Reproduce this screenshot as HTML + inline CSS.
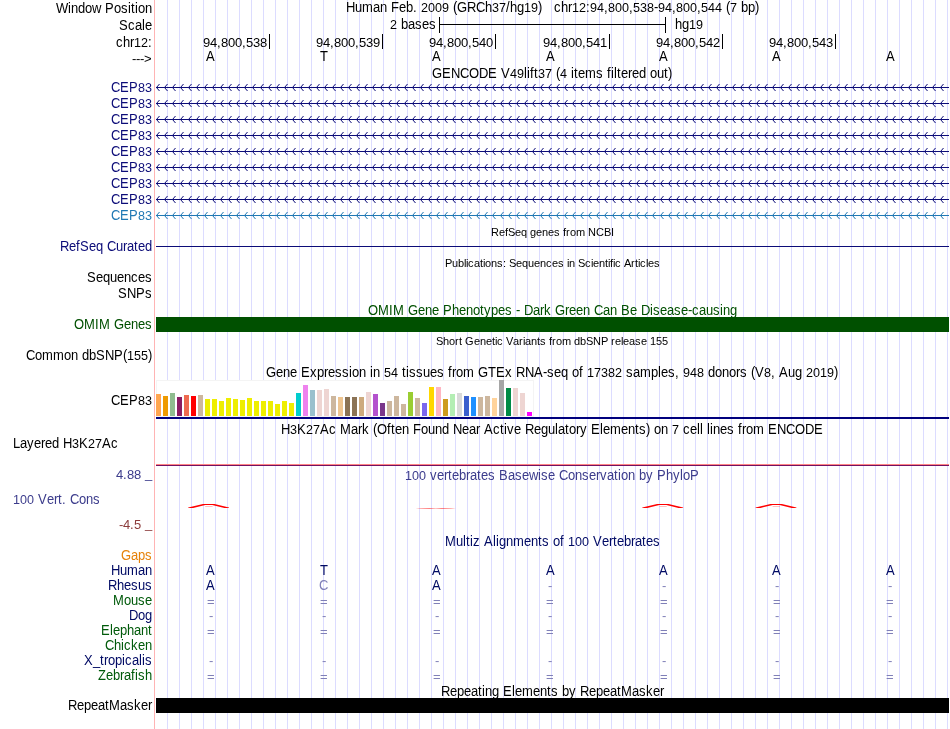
<!DOCTYPE html>
<html lang="en"><head><meta charset="utf-8"><title>UCSC Genome Browser - hg19 chr12:94,800,538-94,800,544</title>
<style>html,body{margin:0;padding:0;background:#fff}body{width:950px;height:729px;overflow:hidden}svg{display:block;will-change:transform;font-family:"Liberation Sans",Arial,Helvetica,sans-serif;font-size:13px}text{white-space:pre}.c{shape-rendering:crispEdges}</style></head><body>
<svg width="950" height="729" viewBox="0 0 950 729">
<rect width="950" height="729" fill="#fff"/>
<g class="c">
<path d="M167.5 0V729M179.5 0V729M191.5 0V729M203.5 0V729M215.5 0V729M227.5 0V729M239.5 0V729M251.5 0V729M263.5 0V729M275.5 0V729M287.5 0V729M299.5 0V729M311.5 0V729M323.5 0V729M335.5 0V729M347.5 0V729M359.5 0V729M371.5 0V729M383.5 0V729M395.5 0V729M407.5 0V729M419.5 0V729M431.5 0V729M443.5 0V729M455.5 0V729M467.5 0V729M479.5 0V729M491.5 0V729M503.5 0V729M515.5 0V729M527.5 0V729M539.5 0V729M551.5 0V729M563.5 0V729M575.5 0V729M587.5 0V729M599.5 0V729M611.5 0V729M623.5 0V729M635.5 0V729M647.5 0V729M659.5 0V729M671.5 0V729M683.5 0V729M695.5 0V729M707.5 0V729M719.5 0V729M731.5 0V729M743.5 0V729M755.5 0V729M767.5 0V729M779.5 0V729M791.5 0V729M803.5 0V729M815.5 0V729M827.5 0V729M839.5 0V729M851.5 0V729M863.5 0V729M875.5 0V729M887.5 0V729M899.5 0V729M911.5 0V729M923.5 0V729M935.5 0V729M947.5 0V729" stroke="#dcdcff" fill="none"/>
<path d="M154.5 0V729" stroke="#ffb4b4" fill="none"/>
</g>
<text id="l_win" x="56 68 71 78 85 92 101 105 114 121 128 131 135 138 145" y="13" transform="matrix(1 0 0 1.08 0 -1.040)">Window Position</text>
<text id="l_scale" x="119 128 135 142 145" y="30" transform="matrix(1 0 0 1.08 0 -2.400)">Scale</text>
<text id="l_chr" x="116 123 130 134 141 148" y="47" transform="matrix(1 0 0 1.08 0 -3.760)">chr<tspan font-size="12.04" textLength="14" lengthAdjust="spacingAndGlyphs">12</tspan>:</text>
<text id="l_arrow" x="132 136 140 144" y="62.6">---&gt;</text>
<text id="t_title" x="346 355 362 373 380 387 391 399 406 413 417 421 428 435 442 449 453 457 467 476 485 492 499 506 510 517 524 531 538 542 546 550 554 561 568 572 579 586 590 597 604 608 615 622 629 633 640 647 654 658 665 672 676 683 690 697 701 708 715 722 726 730 737 741 748 755" y="12" transform="matrix(1 0 0 1.08 0 -0.960)">Human Feb. <tspan font-size="12.04" textLength="28" lengthAdjust="spacingAndGlyphs">2009</tspan> (GRCh<tspan font-size="12.04" textLength="14" lengthAdjust="spacingAndGlyphs">37</tspan>/hg<tspan font-size="12.04" textLength="14" lengthAdjust="spacingAndGlyphs">19</tspan>)   chr<tspan font-size="12.04" textLength="14" lengthAdjust="spacingAndGlyphs">12</tspan>:<tspan font-size="12.04" textLength="14" lengthAdjust="spacingAndGlyphs">94</tspan>,<tspan font-size="12.04" textLength="21" lengthAdjust="spacingAndGlyphs">800</tspan>,<tspan font-size="12.04" textLength="21" lengthAdjust="spacingAndGlyphs">538</tspan>-<tspan font-size="12.04" textLength="14" lengthAdjust="spacingAndGlyphs">94</tspan>,<tspan font-size="12.04" textLength="21" lengthAdjust="spacingAndGlyphs">800</tspan>,<tspan font-size="12.04" textLength="21" lengthAdjust="spacingAndGlyphs">544</tspan> (<tspan font-size="12.04" textLength="7" lengthAdjust="spacingAndGlyphs">7</tspan> bp)</text>
<text id="t_2bases" x="390 397 401 408 415 422 429" y="29" transform="matrix(1 0 0 1.08 0 -2.320)"><tspan font-size="12.04" textLength="7" lengthAdjust="spacingAndGlyphs">2</tspan> bases</text>
<path d="M439 24.5H666M439.5 17V33M665.5 17V33" stroke="#000" fill="none" class="c"/>
<text id="t_hg19" x="675 682 689 696" y="29" transform="matrix(1 0 0 1.08 0 -2.320)">hg<tspan font-size="12.04" textLength="14" lengthAdjust="spacingAndGlyphs">19</tspan></text>
<text id="n0" x="203 210 217 221 228 235 242 246 253 260" y="47">94,800,538</text>
<path d="M269.5 34V49" stroke="#000" fill="none" class="c"/>
<text id="n1" x="316 323 330 334 341 348 355 359 366 373" y="47">94,800,539</text>
<path d="M382.5 34V49" stroke="#000" fill="none" class="c"/>
<text id="n2" x="429 436 443 447 454 461 468 472 479 486" y="47">94,800,540</text>
<path d="M495.5 34V49" stroke="#000" fill="none" class="c"/>
<text id="n3" x="543 550 557 561 568 575 582 586 593 600" y="47">94,800,541</text>
<path d="M609.5 34V49" stroke="#000" fill="none" class="c"/>
<text id="n4" x="656 663 670 674 681 688 695 699 706 713" y="47">94,800,542</text>
<path d="M722.5 34V49" stroke="#000" fill="none" class="c"/>
<text id="n5" x="769 776 783 787 794 801 808 812 819 826" y="47">94,800,543</text>
<path d="M835.5 34V49" stroke="#000" fill="none" class="c"/>
<text id="b0" x="206" y="61" transform="matrix(1 0 0 1.08 0 -4.880)">A</text>
<text id="b1" x="320" y="61" transform="matrix(1 0 0 1.08 0 -4.880)">T</text>
<text id="b2" x="432" y="61" transform="matrix(1 0 0 1.08 0 -4.880)">A</text>
<text id="b3" x="546" y="61" transform="matrix(1 0 0 1.08 0 -4.880)">A</text>
<text id="b4" x="659" y="61" transform="matrix(1 0 0 1.08 0 -4.880)">A</text>
<text id="b5" x="772" y="61" transform="matrix(1 0 0 1.08 0 -4.880)">A</text>
<text id="b6" x="886" y="61" transform="matrix(1 0 0 1.08 0 -4.880)">A</text>
<text id="t_gencode" x="432 442 451 460 469 479 488 497 501 510 517 524 527 530 534 538 545 552 556 560 567 571 574 578 585 596 603 607 611 614 617 621 628 632 639 646 650 657 664 668" y="78" transform="matrix(1 0 0 1.08 0 -6.240)">GENCODE V<tspan font-size="12.04" textLength="14" lengthAdjust="spacingAndGlyphs">49</tspan>lift<tspan font-size="12.04" textLength="14" lengthAdjust="spacingAndGlyphs">37</tspan> (<tspan font-size="12.04" textLength="7" lengthAdjust="spacingAndGlyphs">4</tspan> items filtered out)</text>
<text id="cep0" x="111 120 129 138 145" y="92" fill="#0c0c78" transform="matrix(1 0 0 1.08 0 -7.360)">CEP<tspan font-size="12.04" textLength="14" lengthAdjust="spacingAndGlyphs">83</tspan></text>
<path d="M156 87.5H949" stroke="#0c0c78" fill="none" class="c"/>
<path d="M159.5 84L156.5 87.5L159.5 91M167.5 84L164.5 87.5L167.5 91M175.5 84L172.5 87.5L175.5 91M183.5 84L180.5 87.5L183.5 91M191.5 84L188.5 87.5L191.5 91M199.5 84L196.5 87.5L199.5 91M207.5 84L204.5 87.5L207.5 91M215.5 84L212.5 87.5L215.5 91M223.5 84L220.5 87.5L223.5 91M231.5 84L228.5 87.5L231.5 91M239.5 84L236.5 87.5L239.5 91M247.5 84L244.5 87.5L247.5 91M255.5 84L252.5 87.5L255.5 91M263.5 84L260.5 87.5L263.5 91M271.5 84L268.5 87.5L271.5 91M279.5 84L276.5 87.5L279.5 91M287.5 84L284.5 87.5L287.5 91M295.5 84L292.5 87.5L295.5 91M303.5 84L300.5 87.5L303.5 91M311.5 84L308.5 87.5L311.5 91M319.5 84L316.5 87.5L319.5 91M327.5 84L324.5 87.5L327.5 91M335.5 84L332.5 87.5L335.5 91M343.5 84L340.5 87.5L343.5 91M351.5 84L348.5 87.5L351.5 91M359.5 84L356.5 87.5L359.5 91M367.5 84L364.5 87.5L367.5 91M375.5 84L372.5 87.5L375.5 91M383.5 84L380.5 87.5L383.5 91M391.5 84L388.5 87.5L391.5 91M399.5 84L396.5 87.5L399.5 91M407.5 84L404.5 87.5L407.5 91M415.5 84L412.5 87.5L415.5 91M423.5 84L420.5 87.5L423.5 91M431.5 84L428.5 87.5L431.5 91M439.5 84L436.5 87.5L439.5 91M447.5 84L444.5 87.5L447.5 91M455.5 84L452.5 87.5L455.5 91M463.5 84L460.5 87.5L463.5 91M471.5 84L468.5 87.5L471.5 91M479.5 84L476.5 87.5L479.5 91M487.5 84L484.5 87.5L487.5 91M495.5 84L492.5 87.5L495.5 91M503.5 84L500.5 87.5L503.5 91M511.5 84L508.5 87.5L511.5 91M519.5 84L516.5 87.5L519.5 91M527.5 84L524.5 87.5L527.5 91M535.5 84L532.5 87.5L535.5 91M543.5 84L540.5 87.5L543.5 91M551.5 84L548.5 87.5L551.5 91M559.5 84L556.5 87.5L559.5 91M567.5 84L564.5 87.5L567.5 91M575.5 84L572.5 87.5L575.5 91M583.5 84L580.5 87.5L583.5 91M591.5 84L588.5 87.5L591.5 91M599.5 84L596.5 87.5L599.5 91M607.5 84L604.5 87.5L607.5 91M615.5 84L612.5 87.5L615.5 91M623.5 84L620.5 87.5L623.5 91M631.5 84L628.5 87.5L631.5 91M639.5 84L636.5 87.5L639.5 91M647.5 84L644.5 87.5L647.5 91M655.5 84L652.5 87.5L655.5 91M663.5 84L660.5 87.5L663.5 91M671.5 84L668.5 87.5L671.5 91M679.5 84L676.5 87.5L679.5 91M687.5 84L684.5 87.5L687.5 91M695.5 84L692.5 87.5L695.5 91M703.5 84L700.5 87.5L703.5 91M711.5 84L708.5 87.5L711.5 91M719.5 84L716.5 87.5L719.5 91M727.5 84L724.5 87.5L727.5 91M735.5 84L732.5 87.5L735.5 91M743.5 84L740.5 87.5L743.5 91M751.5 84L748.5 87.5L751.5 91M759.5 84L756.5 87.5L759.5 91M767.5 84L764.5 87.5L767.5 91M775.5 84L772.5 87.5L775.5 91M783.5 84L780.5 87.5L783.5 91M791.5 84L788.5 87.5L791.5 91M799.5 84L796.5 87.5L799.5 91M807.5 84L804.5 87.5L807.5 91M815.5 84L812.5 87.5L815.5 91M823.5 84L820.5 87.5L823.5 91M831.5 84L828.5 87.5L831.5 91M839.5 84L836.5 87.5L839.5 91M847.5 84L844.5 87.5L847.5 91M855.5 84L852.5 87.5L855.5 91M863.5 84L860.5 87.5L863.5 91M871.5 84L868.5 87.5L871.5 91M879.5 84L876.5 87.5L879.5 91M887.5 84L884.5 87.5L887.5 91M895.5 84L892.5 87.5L895.5 91M903.5 84L900.5 87.5L903.5 91M911.5 84L908.5 87.5L911.5 91M919.5 84L916.5 87.5L919.5 91M927.5 84L924.5 87.5L927.5 91M935.5 84L932.5 87.5L935.5 91M943.5 84L940.5 87.5L943.5 91" stroke="#0c0c78" fill="none"/>
<text id="cep1" x="111 120 129 138 145" y="108" fill="#0c0c78" transform="matrix(1 0 0 1.08 0 -8.640)">CEP<tspan font-size="12.04" textLength="14" lengthAdjust="spacingAndGlyphs">83</tspan></text>
<path d="M156 103.5H949" stroke="#0c0c78" fill="none" class="c"/>
<path d="M159.5 100L156.5 103.5L159.5 107M167.5 100L164.5 103.5L167.5 107M175.5 100L172.5 103.5L175.5 107M183.5 100L180.5 103.5L183.5 107M191.5 100L188.5 103.5L191.5 107M199.5 100L196.5 103.5L199.5 107M207.5 100L204.5 103.5L207.5 107M215.5 100L212.5 103.5L215.5 107M223.5 100L220.5 103.5L223.5 107M231.5 100L228.5 103.5L231.5 107M239.5 100L236.5 103.5L239.5 107M247.5 100L244.5 103.5L247.5 107M255.5 100L252.5 103.5L255.5 107M263.5 100L260.5 103.5L263.5 107M271.5 100L268.5 103.5L271.5 107M279.5 100L276.5 103.5L279.5 107M287.5 100L284.5 103.5L287.5 107M295.5 100L292.5 103.5L295.5 107M303.5 100L300.5 103.5L303.5 107M311.5 100L308.5 103.5L311.5 107M319.5 100L316.5 103.5L319.5 107M327.5 100L324.5 103.5L327.5 107M335.5 100L332.5 103.5L335.5 107M343.5 100L340.5 103.5L343.5 107M351.5 100L348.5 103.5L351.5 107M359.5 100L356.5 103.5L359.5 107M367.5 100L364.5 103.5L367.5 107M375.5 100L372.5 103.5L375.5 107M383.5 100L380.5 103.5L383.5 107M391.5 100L388.5 103.5L391.5 107M399.5 100L396.5 103.5L399.5 107M407.5 100L404.5 103.5L407.5 107M415.5 100L412.5 103.5L415.5 107M423.5 100L420.5 103.5L423.5 107M431.5 100L428.5 103.5L431.5 107M439.5 100L436.5 103.5L439.5 107M447.5 100L444.5 103.5L447.5 107M455.5 100L452.5 103.5L455.5 107M463.5 100L460.5 103.5L463.5 107M471.5 100L468.5 103.5L471.5 107M479.5 100L476.5 103.5L479.5 107M487.5 100L484.5 103.5L487.5 107M495.5 100L492.5 103.5L495.5 107M503.5 100L500.5 103.5L503.5 107M511.5 100L508.5 103.5L511.5 107M519.5 100L516.5 103.5L519.5 107M527.5 100L524.5 103.5L527.5 107M535.5 100L532.5 103.5L535.5 107M543.5 100L540.5 103.5L543.5 107M551.5 100L548.5 103.5L551.5 107M559.5 100L556.5 103.5L559.5 107M567.5 100L564.5 103.5L567.5 107M575.5 100L572.5 103.5L575.5 107M583.5 100L580.5 103.5L583.5 107M591.5 100L588.5 103.5L591.5 107M599.5 100L596.5 103.5L599.5 107M607.5 100L604.5 103.5L607.5 107M615.5 100L612.5 103.5L615.5 107M623.5 100L620.5 103.5L623.5 107M631.5 100L628.5 103.5L631.5 107M639.5 100L636.5 103.5L639.5 107M647.5 100L644.5 103.5L647.5 107M655.5 100L652.5 103.5L655.5 107M663.5 100L660.5 103.5L663.5 107M671.5 100L668.5 103.5L671.5 107M679.5 100L676.5 103.5L679.5 107M687.5 100L684.5 103.5L687.5 107M695.5 100L692.5 103.5L695.5 107M703.5 100L700.5 103.5L703.5 107M711.5 100L708.5 103.5L711.5 107M719.5 100L716.5 103.5L719.5 107M727.5 100L724.5 103.5L727.5 107M735.5 100L732.5 103.5L735.5 107M743.5 100L740.5 103.5L743.5 107M751.5 100L748.5 103.5L751.5 107M759.5 100L756.5 103.5L759.5 107M767.5 100L764.5 103.5L767.5 107M775.5 100L772.5 103.5L775.5 107M783.5 100L780.5 103.5L783.5 107M791.5 100L788.5 103.5L791.5 107M799.5 100L796.5 103.5L799.5 107M807.5 100L804.5 103.5L807.5 107M815.5 100L812.5 103.5L815.5 107M823.5 100L820.5 103.5L823.5 107M831.5 100L828.5 103.5L831.5 107M839.5 100L836.5 103.5L839.5 107M847.5 100L844.5 103.5L847.5 107M855.5 100L852.5 103.5L855.5 107M863.5 100L860.5 103.5L863.5 107M871.5 100L868.5 103.5L871.5 107M879.5 100L876.5 103.5L879.5 107M887.5 100L884.5 103.5L887.5 107M895.5 100L892.5 103.5L895.5 107M903.5 100L900.5 103.5L903.5 107M911.5 100L908.5 103.5L911.5 107M919.5 100L916.5 103.5L919.5 107M927.5 100L924.5 103.5L927.5 107M935.5 100L932.5 103.5L935.5 107M943.5 100L940.5 103.5L943.5 107" stroke="#0c0c78" fill="none"/>
<text id="cep2" x="111 120 129 138 145" y="124" fill="#0c0c78" transform="matrix(1 0 0 1.08 0 -9.920)">CEP<tspan font-size="12.04" textLength="14" lengthAdjust="spacingAndGlyphs">83</tspan></text>
<path d="M156 119.5H949" stroke="#0c0c78" fill="none" class="c"/>
<path d="M159.5 116L156.5 119.5L159.5 123M167.5 116L164.5 119.5L167.5 123M175.5 116L172.5 119.5L175.5 123M183.5 116L180.5 119.5L183.5 123M191.5 116L188.5 119.5L191.5 123M199.5 116L196.5 119.5L199.5 123M207.5 116L204.5 119.5L207.5 123M215.5 116L212.5 119.5L215.5 123M223.5 116L220.5 119.5L223.5 123M231.5 116L228.5 119.5L231.5 123M239.5 116L236.5 119.5L239.5 123M247.5 116L244.5 119.5L247.5 123M255.5 116L252.5 119.5L255.5 123M263.5 116L260.5 119.5L263.5 123M271.5 116L268.5 119.5L271.5 123M279.5 116L276.5 119.5L279.5 123M287.5 116L284.5 119.5L287.5 123M295.5 116L292.5 119.5L295.5 123M303.5 116L300.5 119.5L303.5 123M311.5 116L308.5 119.5L311.5 123M319.5 116L316.5 119.5L319.5 123M327.5 116L324.5 119.5L327.5 123M335.5 116L332.5 119.5L335.5 123M343.5 116L340.5 119.5L343.5 123M351.5 116L348.5 119.5L351.5 123M359.5 116L356.5 119.5L359.5 123M367.5 116L364.5 119.5L367.5 123M375.5 116L372.5 119.5L375.5 123M383.5 116L380.5 119.5L383.5 123M391.5 116L388.5 119.5L391.5 123M399.5 116L396.5 119.5L399.5 123M407.5 116L404.5 119.5L407.5 123M415.5 116L412.5 119.5L415.5 123M423.5 116L420.5 119.5L423.5 123M431.5 116L428.5 119.5L431.5 123M439.5 116L436.5 119.5L439.5 123M447.5 116L444.5 119.5L447.5 123M455.5 116L452.5 119.5L455.5 123M463.5 116L460.5 119.5L463.5 123M471.5 116L468.5 119.5L471.5 123M479.5 116L476.5 119.5L479.5 123M487.5 116L484.5 119.5L487.5 123M495.5 116L492.5 119.5L495.5 123M503.5 116L500.5 119.5L503.5 123M511.5 116L508.5 119.5L511.5 123M519.5 116L516.5 119.5L519.5 123M527.5 116L524.5 119.5L527.5 123M535.5 116L532.5 119.5L535.5 123M543.5 116L540.5 119.5L543.5 123M551.5 116L548.5 119.5L551.5 123M559.5 116L556.5 119.5L559.5 123M567.5 116L564.5 119.5L567.5 123M575.5 116L572.5 119.5L575.5 123M583.5 116L580.5 119.5L583.5 123M591.5 116L588.5 119.5L591.5 123M599.5 116L596.5 119.5L599.5 123M607.5 116L604.5 119.5L607.5 123M615.5 116L612.5 119.5L615.5 123M623.5 116L620.5 119.5L623.5 123M631.5 116L628.5 119.5L631.5 123M639.5 116L636.5 119.5L639.5 123M647.5 116L644.5 119.5L647.5 123M655.5 116L652.5 119.5L655.5 123M663.5 116L660.5 119.5L663.5 123M671.5 116L668.5 119.5L671.5 123M679.5 116L676.5 119.5L679.5 123M687.5 116L684.5 119.5L687.5 123M695.5 116L692.5 119.5L695.5 123M703.5 116L700.5 119.5L703.5 123M711.5 116L708.5 119.5L711.5 123M719.5 116L716.5 119.5L719.5 123M727.5 116L724.5 119.5L727.5 123M735.5 116L732.5 119.5L735.5 123M743.5 116L740.5 119.5L743.5 123M751.5 116L748.5 119.5L751.5 123M759.5 116L756.5 119.5L759.5 123M767.5 116L764.5 119.5L767.5 123M775.5 116L772.5 119.5L775.5 123M783.5 116L780.5 119.5L783.5 123M791.5 116L788.5 119.5L791.5 123M799.5 116L796.5 119.5L799.5 123M807.5 116L804.5 119.5L807.5 123M815.5 116L812.5 119.5L815.5 123M823.5 116L820.5 119.5L823.5 123M831.5 116L828.5 119.5L831.5 123M839.5 116L836.5 119.5L839.5 123M847.5 116L844.5 119.5L847.5 123M855.5 116L852.5 119.5L855.5 123M863.5 116L860.5 119.5L863.5 123M871.5 116L868.5 119.5L871.5 123M879.5 116L876.5 119.5L879.5 123M887.5 116L884.5 119.5L887.5 123M895.5 116L892.5 119.5L895.5 123M903.5 116L900.5 119.5L903.5 123M911.5 116L908.5 119.5L911.5 123M919.5 116L916.5 119.5L919.5 123M927.5 116L924.5 119.5L927.5 123M935.5 116L932.5 119.5L935.5 123M943.5 116L940.5 119.5L943.5 123" stroke="#0c0c78" fill="none"/>
<text id="cep3" x="111 120 129 138 145" y="140" fill="#0c0c78" transform="matrix(1 0 0 1.08 0 -11.200)">CEP<tspan font-size="12.04" textLength="14" lengthAdjust="spacingAndGlyphs">83</tspan></text>
<path d="M156 135.5H949" stroke="#0c0c78" fill="none" class="c"/>
<path d="M159.5 132L156.5 135.5L159.5 139M167.5 132L164.5 135.5L167.5 139M175.5 132L172.5 135.5L175.5 139M183.5 132L180.5 135.5L183.5 139M191.5 132L188.5 135.5L191.5 139M199.5 132L196.5 135.5L199.5 139M207.5 132L204.5 135.5L207.5 139M215.5 132L212.5 135.5L215.5 139M223.5 132L220.5 135.5L223.5 139M231.5 132L228.5 135.5L231.5 139M239.5 132L236.5 135.5L239.5 139M247.5 132L244.5 135.5L247.5 139M255.5 132L252.5 135.5L255.5 139M263.5 132L260.5 135.5L263.5 139M271.5 132L268.5 135.5L271.5 139M279.5 132L276.5 135.5L279.5 139M287.5 132L284.5 135.5L287.5 139M295.5 132L292.5 135.5L295.5 139M303.5 132L300.5 135.5L303.5 139M311.5 132L308.5 135.5L311.5 139M319.5 132L316.5 135.5L319.5 139M327.5 132L324.5 135.5L327.5 139M335.5 132L332.5 135.5L335.5 139M343.5 132L340.5 135.5L343.5 139M351.5 132L348.5 135.5L351.5 139M359.5 132L356.5 135.5L359.5 139M367.5 132L364.5 135.5L367.5 139M375.5 132L372.5 135.5L375.5 139M383.5 132L380.5 135.5L383.5 139M391.5 132L388.5 135.5L391.5 139M399.5 132L396.5 135.5L399.5 139M407.5 132L404.5 135.5L407.5 139M415.5 132L412.5 135.5L415.5 139M423.5 132L420.5 135.5L423.5 139M431.5 132L428.5 135.5L431.5 139M439.5 132L436.5 135.5L439.5 139M447.5 132L444.5 135.5L447.5 139M455.5 132L452.5 135.5L455.5 139M463.5 132L460.5 135.5L463.5 139M471.5 132L468.5 135.5L471.5 139M479.5 132L476.5 135.5L479.5 139M487.5 132L484.5 135.5L487.5 139M495.5 132L492.5 135.5L495.5 139M503.5 132L500.5 135.5L503.5 139M511.5 132L508.5 135.5L511.5 139M519.5 132L516.5 135.5L519.5 139M527.5 132L524.5 135.5L527.5 139M535.5 132L532.5 135.5L535.5 139M543.5 132L540.5 135.5L543.5 139M551.5 132L548.5 135.5L551.5 139M559.5 132L556.5 135.5L559.5 139M567.5 132L564.5 135.5L567.5 139M575.5 132L572.5 135.5L575.5 139M583.5 132L580.5 135.5L583.5 139M591.5 132L588.5 135.5L591.5 139M599.5 132L596.5 135.5L599.5 139M607.5 132L604.5 135.5L607.5 139M615.5 132L612.5 135.5L615.5 139M623.5 132L620.5 135.5L623.5 139M631.5 132L628.5 135.5L631.5 139M639.5 132L636.5 135.5L639.5 139M647.5 132L644.5 135.5L647.5 139M655.5 132L652.5 135.5L655.5 139M663.5 132L660.5 135.5L663.5 139M671.5 132L668.5 135.5L671.5 139M679.5 132L676.5 135.5L679.5 139M687.5 132L684.5 135.5L687.5 139M695.5 132L692.5 135.5L695.5 139M703.5 132L700.5 135.5L703.5 139M711.5 132L708.5 135.5L711.5 139M719.5 132L716.5 135.5L719.5 139M727.5 132L724.5 135.5L727.5 139M735.5 132L732.5 135.5L735.5 139M743.5 132L740.5 135.5L743.5 139M751.5 132L748.5 135.5L751.5 139M759.5 132L756.5 135.5L759.5 139M767.5 132L764.5 135.5L767.5 139M775.5 132L772.5 135.5L775.5 139M783.5 132L780.5 135.5L783.5 139M791.5 132L788.5 135.5L791.5 139M799.5 132L796.5 135.5L799.5 139M807.5 132L804.5 135.5L807.5 139M815.5 132L812.5 135.5L815.5 139M823.5 132L820.5 135.5L823.5 139M831.5 132L828.5 135.5L831.5 139M839.5 132L836.5 135.5L839.5 139M847.5 132L844.5 135.5L847.5 139M855.5 132L852.5 135.5L855.5 139M863.5 132L860.5 135.5L863.5 139M871.5 132L868.5 135.5L871.5 139M879.5 132L876.5 135.5L879.5 139M887.5 132L884.5 135.5L887.5 139M895.5 132L892.5 135.5L895.5 139M903.5 132L900.5 135.5L903.5 139M911.5 132L908.5 135.5L911.5 139M919.5 132L916.5 135.5L919.5 139M927.5 132L924.5 135.5L927.5 139M935.5 132L932.5 135.5L935.5 139M943.5 132L940.5 135.5L943.5 139" stroke="#0c0c78" fill="none"/>
<text id="cep4" x="111 120 129 138 145" y="156" fill="#0c0c78" transform="matrix(1 0 0 1.08 0 -12.480)">CEP<tspan font-size="12.04" textLength="14" lengthAdjust="spacingAndGlyphs">83</tspan></text>
<path d="M156 151.5H949" stroke="#0c0c78" fill="none" class="c"/>
<path d="M159.5 148L156.5 151.5L159.5 155M167.5 148L164.5 151.5L167.5 155M175.5 148L172.5 151.5L175.5 155M183.5 148L180.5 151.5L183.5 155M191.5 148L188.5 151.5L191.5 155M199.5 148L196.5 151.5L199.5 155M207.5 148L204.5 151.5L207.5 155M215.5 148L212.5 151.5L215.5 155M223.5 148L220.5 151.5L223.5 155M231.5 148L228.5 151.5L231.5 155M239.5 148L236.5 151.5L239.5 155M247.5 148L244.5 151.5L247.5 155M255.5 148L252.5 151.5L255.5 155M263.5 148L260.5 151.5L263.5 155M271.5 148L268.5 151.5L271.5 155M279.5 148L276.5 151.5L279.5 155M287.5 148L284.5 151.5L287.5 155M295.5 148L292.5 151.5L295.5 155M303.5 148L300.5 151.5L303.5 155M311.5 148L308.5 151.5L311.5 155M319.5 148L316.5 151.5L319.5 155M327.5 148L324.5 151.5L327.5 155M335.5 148L332.5 151.5L335.5 155M343.5 148L340.5 151.5L343.5 155M351.5 148L348.5 151.5L351.5 155M359.5 148L356.5 151.5L359.5 155M367.5 148L364.5 151.5L367.5 155M375.5 148L372.5 151.5L375.5 155M383.5 148L380.5 151.5L383.5 155M391.5 148L388.5 151.5L391.5 155M399.5 148L396.5 151.5L399.5 155M407.5 148L404.5 151.5L407.5 155M415.5 148L412.5 151.5L415.5 155M423.5 148L420.5 151.5L423.5 155M431.5 148L428.5 151.5L431.5 155M439.5 148L436.5 151.5L439.5 155M447.5 148L444.5 151.5L447.5 155M455.5 148L452.5 151.5L455.5 155M463.5 148L460.5 151.5L463.5 155M471.5 148L468.5 151.5L471.5 155M479.5 148L476.5 151.5L479.5 155M487.5 148L484.5 151.5L487.5 155M495.5 148L492.5 151.5L495.5 155M503.5 148L500.5 151.5L503.5 155M511.5 148L508.5 151.5L511.5 155M519.5 148L516.5 151.5L519.5 155M527.5 148L524.5 151.5L527.5 155M535.5 148L532.5 151.5L535.5 155M543.5 148L540.5 151.5L543.5 155M551.5 148L548.5 151.5L551.5 155M559.5 148L556.5 151.5L559.5 155M567.5 148L564.5 151.5L567.5 155M575.5 148L572.5 151.5L575.5 155M583.5 148L580.5 151.5L583.5 155M591.5 148L588.5 151.5L591.5 155M599.5 148L596.5 151.5L599.5 155M607.5 148L604.5 151.5L607.5 155M615.5 148L612.5 151.5L615.5 155M623.5 148L620.5 151.5L623.5 155M631.5 148L628.5 151.5L631.5 155M639.5 148L636.5 151.5L639.5 155M647.5 148L644.5 151.5L647.5 155M655.5 148L652.5 151.5L655.5 155M663.5 148L660.5 151.5L663.5 155M671.5 148L668.5 151.5L671.5 155M679.5 148L676.5 151.5L679.5 155M687.5 148L684.5 151.5L687.5 155M695.5 148L692.5 151.5L695.5 155M703.5 148L700.5 151.5L703.5 155M711.5 148L708.5 151.5L711.5 155M719.5 148L716.5 151.5L719.5 155M727.5 148L724.5 151.5L727.5 155M735.5 148L732.5 151.5L735.5 155M743.5 148L740.5 151.5L743.5 155M751.5 148L748.5 151.5L751.5 155M759.5 148L756.5 151.5L759.5 155M767.5 148L764.5 151.5L767.5 155M775.5 148L772.5 151.5L775.5 155M783.5 148L780.5 151.5L783.5 155M791.5 148L788.5 151.5L791.5 155M799.5 148L796.5 151.5L799.5 155M807.5 148L804.5 151.5L807.5 155M815.5 148L812.5 151.5L815.5 155M823.5 148L820.5 151.5L823.5 155M831.5 148L828.5 151.5L831.5 155M839.5 148L836.5 151.5L839.5 155M847.5 148L844.5 151.5L847.5 155M855.5 148L852.5 151.5L855.5 155M863.5 148L860.5 151.5L863.5 155M871.5 148L868.5 151.5L871.5 155M879.5 148L876.5 151.5L879.5 155M887.5 148L884.5 151.5L887.5 155M895.5 148L892.5 151.5L895.5 155M903.5 148L900.5 151.5L903.5 155M911.5 148L908.5 151.5L911.5 155M919.5 148L916.5 151.5L919.5 155M927.5 148L924.5 151.5L927.5 155M935.5 148L932.5 151.5L935.5 155M943.5 148L940.5 151.5L943.5 155" stroke="#0c0c78" fill="none"/>
<text id="cep5" x="111 120 129 138 145" y="172" fill="#0c0c78" transform="matrix(1 0 0 1.08 0 -13.760)">CEP<tspan font-size="12.04" textLength="14" lengthAdjust="spacingAndGlyphs">83</tspan></text>
<path d="M156 167.5H949" stroke="#0c0c78" fill="none" class="c"/>
<path d="M159.5 164L156.5 167.5L159.5 171M167.5 164L164.5 167.5L167.5 171M175.5 164L172.5 167.5L175.5 171M183.5 164L180.5 167.5L183.5 171M191.5 164L188.5 167.5L191.5 171M199.5 164L196.5 167.5L199.5 171M207.5 164L204.5 167.5L207.5 171M215.5 164L212.5 167.5L215.5 171M223.5 164L220.5 167.5L223.5 171M231.5 164L228.5 167.5L231.5 171M239.5 164L236.5 167.5L239.5 171M247.5 164L244.5 167.5L247.5 171M255.5 164L252.5 167.5L255.5 171M263.5 164L260.5 167.5L263.5 171M271.5 164L268.5 167.5L271.5 171M279.5 164L276.5 167.5L279.5 171M287.5 164L284.5 167.5L287.5 171M295.5 164L292.5 167.5L295.5 171M303.5 164L300.5 167.5L303.5 171M311.5 164L308.5 167.5L311.5 171M319.5 164L316.5 167.5L319.5 171M327.5 164L324.5 167.5L327.5 171M335.5 164L332.5 167.5L335.5 171M343.5 164L340.5 167.5L343.5 171M351.5 164L348.5 167.5L351.5 171M359.5 164L356.5 167.5L359.5 171M367.5 164L364.5 167.5L367.5 171M375.5 164L372.5 167.5L375.5 171M383.5 164L380.5 167.5L383.5 171M391.5 164L388.5 167.5L391.5 171M399.5 164L396.5 167.5L399.5 171M407.5 164L404.5 167.5L407.5 171M415.5 164L412.5 167.5L415.5 171M423.5 164L420.5 167.5L423.5 171M431.5 164L428.5 167.5L431.5 171M439.5 164L436.5 167.5L439.5 171M447.5 164L444.5 167.5L447.5 171M455.5 164L452.5 167.5L455.5 171M463.5 164L460.5 167.5L463.5 171M471.5 164L468.5 167.5L471.5 171M479.5 164L476.5 167.5L479.5 171M487.5 164L484.5 167.5L487.5 171M495.5 164L492.5 167.5L495.5 171M503.5 164L500.5 167.5L503.5 171M511.5 164L508.5 167.5L511.5 171M519.5 164L516.5 167.5L519.5 171M527.5 164L524.5 167.5L527.5 171M535.5 164L532.5 167.5L535.5 171M543.5 164L540.5 167.5L543.5 171M551.5 164L548.5 167.5L551.5 171M559.5 164L556.5 167.5L559.5 171M567.5 164L564.5 167.5L567.5 171M575.5 164L572.5 167.5L575.5 171M583.5 164L580.5 167.5L583.5 171M591.5 164L588.5 167.5L591.5 171M599.5 164L596.5 167.5L599.5 171M607.5 164L604.5 167.5L607.5 171M615.5 164L612.5 167.5L615.5 171M623.5 164L620.5 167.5L623.5 171M631.5 164L628.5 167.5L631.5 171M639.5 164L636.5 167.5L639.5 171M647.5 164L644.5 167.5L647.5 171M655.5 164L652.5 167.5L655.5 171M663.5 164L660.5 167.5L663.5 171M671.5 164L668.5 167.5L671.5 171M679.5 164L676.5 167.5L679.5 171M687.5 164L684.5 167.5L687.5 171M695.5 164L692.5 167.5L695.5 171M703.5 164L700.5 167.5L703.5 171M711.5 164L708.5 167.5L711.5 171M719.5 164L716.5 167.5L719.5 171M727.5 164L724.5 167.5L727.5 171M735.5 164L732.5 167.5L735.5 171M743.5 164L740.5 167.5L743.5 171M751.5 164L748.5 167.5L751.5 171M759.5 164L756.5 167.5L759.5 171M767.5 164L764.5 167.5L767.5 171M775.5 164L772.5 167.5L775.5 171M783.5 164L780.5 167.5L783.5 171M791.5 164L788.5 167.5L791.5 171M799.5 164L796.5 167.5L799.5 171M807.5 164L804.5 167.5L807.5 171M815.5 164L812.5 167.5L815.5 171M823.5 164L820.5 167.5L823.5 171M831.5 164L828.5 167.5L831.5 171M839.5 164L836.5 167.5L839.5 171M847.5 164L844.5 167.5L847.5 171M855.5 164L852.5 167.5L855.5 171M863.5 164L860.5 167.5L863.5 171M871.5 164L868.5 167.5L871.5 171M879.5 164L876.5 167.5L879.5 171M887.5 164L884.5 167.5L887.5 171M895.5 164L892.5 167.5L895.5 171M903.5 164L900.5 167.5L903.5 171M911.5 164L908.5 167.5L911.5 171M919.5 164L916.5 167.5L919.5 171M927.5 164L924.5 167.5L927.5 171M935.5 164L932.5 167.5L935.5 171M943.5 164L940.5 167.5L943.5 171" stroke="#0c0c78" fill="none"/>
<text id="cep6" x="111 120 129 138 145" y="188" fill="#0c0c78" transform="matrix(1 0 0 1.08 0 -15.040)">CEP<tspan font-size="12.04" textLength="14" lengthAdjust="spacingAndGlyphs">83</tspan></text>
<path d="M156 183.5H949" stroke="#0c0c78" fill="none" class="c"/>
<path d="M159.5 180L156.5 183.5L159.5 187M167.5 180L164.5 183.5L167.5 187M175.5 180L172.5 183.5L175.5 187M183.5 180L180.5 183.5L183.5 187M191.5 180L188.5 183.5L191.5 187M199.5 180L196.5 183.5L199.5 187M207.5 180L204.5 183.5L207.5 187M215.5 180L212.5 183.5L215.5 187M223.5 180L220.5 183.5L223.5 187M231.5 180L228.5 183.5L231.5 187M239.5 180L236.5 183.5L239.5 187M247.5 180L244.5 183.5L247.5 187M255.5 180L252.5 183.5L255.5 187M263.5 180L260.5 183.5L263.5 187M271.5 180L268.5 183.5L271.5 187M279.5 180L276.5 183.5L279.5 187M287.5 180L284.5 183.5L287.5 187M295.5 180L292.5 183.5L295.5 187M303.5 180L300.5 183.5L303.5 187M311.5 180L308.5 183.5L311.5 187M319.5 180L316.5 183.5L319.5 187M327.5 180L324.5 183.5L327.5 187M335.5 180L332.5 183.5L335.5 187M343.5 180L340.5 183.5L343.5 187M351.5 180L348.5 183.5L351.5 187M359.5 180L356.5 183.5L359.5 187M367.5 180L364.5 183.5L367.5 187M375.5 180L372.5 183.5L375.5 187M383.5 180L380.5 183.5L383.5 187M391.5 180L388.5 183.5L391.5 187M399.5 180L396.5 183.5L399.5 187M407.5 180L404.5 183.5L407.5 187M415.5 180L412.5 183.5L415.5 187M423.5 180L420.5 183.5L423.5 187M431.5 180L428.5 183.5L431.5 187M439.5 180L436.5 183.5L439.5 187M447.5 180L444.5 183.5L447.5 187M455.5 180L452.5 183.5L455.5 187M463.5 180L460.5 183.5L463.5 187M471.5 180L468.5 183.5L471.5 187M479.5 180L476.5 183.5L479.5 187M487.5 180L484.5 183.5L487.5 187M495.5 180L492.5 183.5L495.5 187M503.5 180L500.5 183.5L503.5 187M511.5 180L508.5 183.5L511.5 187M519.5 180L516.5 183.5L519.5 187M527.5 180L524.5 183.5L527.5 187M535.5 180L532.5 183.5L535.5 187M543.5 180L540.5 183.5L543.5 187M551.5 180L548.5 183.5L551.5 187M559.5 180L556.5 183.5L559.5 187M567.5 180L564.5 183.5L567.5 187M575.5 180L572.5 183.5L575.5 187M583.5 180L580.5 183.5L583.5 187M591.5 180L588.5 183.5L591.5 187M599.5 180L596.5 183.5L599.5 187M607.5 180L604.5 183.5L607.5 187M615.5 180L612.5 183.5L615.5 187M623.5 180L620.5 183.5L623.5 187M631.5 180L628.5 183.5L631.5 187M639.5 180L636.5 183.5L639.5 187M647.5 180L644.5 183.5L647.5 187M655.5 180L652.5 183.5L655.5 187M663.5 180L660.5 183.5L663.5 187M671.5 180L668.5 183.5L671.5 187M679.5 180L676.5 183.5L679.5 187M687.5 180L684.5 183.5L687.5 187M695.5 180L692.5 183.5L695.5 187M703.5 180L700.5 183.5L703.5 187M711.5 180L708.5 183.5L711.5 187M719.5 180L716.5 183.5L719.5 187M727.5 180L724.5 183.5L727.5 187M735.5 180L732.5 183.5L735.5 187M743.5 180L740.5 183.5L743.5 187M751.5 180L748.5 183.5L751.5 187M759.5 180L756.5 183.5L759.5 187M767.5 180L764.5 183.5L767.5 187M775.5 180L772.5 183.5L775.5 187M783.5 180L780.5 183.5L783.5 187M791.5 180L788.5 183.5L791.5 187M799.5 180L796.5 183.5L799.5 187M807.5 180L804.5 183.5L807.5 187M815.5 180L812.5 183.5L815.5 187M823.5 180L820.5 183.5L823.5 187M831.5 180L828.5 183.5L831.5 187M839.5 180L836.5 183.5L839.5 187M847.5 180L844.5 183.5L847.5 187M855.5 180L852.5 183.5L855.5 187M863.5 180L860.5 183.5L863.5 187M871.5 180L868.5 183.5L871.5 187M879.5 180L876.5 183.5L879.5 187M887.5 180L884.5 183.5L887.5 187M895.5 180L892.5 183.5L895.5 187M903.5 180L900.5 183.5L903.5 187M911.5 180L908.5 183.5L911.5 187M919.5 180L916.5 183.5L919.5 187M927.5 180L924.5 183.5L927.5 187M935.5 180L932.5 183.5L935.5 187M943.5 180L940.5 183.5L943.5 187" stroke="#0c0c78" fill="none"/>
<text id="cep7" x="111 120 129 138 145" y="204" fill="#0c0c78" transform="matrix(1 0 0 1.08 0 -16.320)">CEP<tspan font-size="12.04" textLength="14" lengthAdjust="spacingAndGlyphs">83</tspan></text>
<path d="M156 199.5H949" stroke="#0c0c78" fill="none" class="c"/>
<path d="M159.5 196L156.5 199.5L159.5 203M167.5 196L164.5 199.5L167.5 203M175.5 196L172.5 199.5L175.5 203M183.5 196L180.5 199.5L183.5 203M191.5 196L188.5 199.5L191.5 203M199.5 196L196.5 199.5L199.5 203M207.5 196L204.5 199.5L207.5 203M215.5 196L212.5 199.5L215.5 203M223.5 196L220.5 199.5L223.5 203M231.5 196L228.5 199.5L231.5 203M239.5 196L236.5 199.5L239.5 203M247.5 196L244.5 199.5L247.5 203M255.5 196L252.5 199.5L255.5 203M263.5 196L260.5 199.5L263.5 203M271.5 196L268.5 199.5L271.5 203M279.5 196L276.5 199.5L279.5 203M287.5 196L284.5 199.5L287.5 203M295.5 196L292.5 199.5L295.5 203M303.5 196L300.5 199.5L303.5 203M311.5 196L308.5 199.5L311.5 203M319.5 196L316.5 199.5L319.5 203M327.5 196L324.5 199.5L327.5 203M335.5 196L332.5 199.5L335.5 203M343.5 196L340.5 199.5L343.5 203M351.5 196L348.5 199.5L351.5 203M359.5 196L356.5 199.5L359.5 203M367.5 196L364.5 199.5L367.5 203M375.5 196L372.5 199.5L375.5 203M383.5 196L380.5 199.5L383.5 203M391.5 196L388.5 199.5L391.5 203M399.5 196L396.5 199.5L399.5 203M407.5 196L404.5 199.5L407.5 203M415.5 196L412.5 199.5L415.5 203M423.5 196L420.5 199.5L423.5 203M431.5 196L428.5 199.5L431.5 203M439.5 196L436.5 199.5L439.5 203M447.5 196L444.5 199.5L447.5 203M455.5 196L452.5 199.5L455.5 203M463.5 196L460.5 199.5L463.5 203M471.5 196L468.5 199.5L471.5 203M479.5 196L476.5 199.5L479.5 203M487.5 196L484.5 199.5L487.5 203M495.5 196L492.5 199.5L495.5 203M503.5 196L500.5 199.5L503.5 203M511.5 196L508.5 199.5L511.5 203M519.5 196L516.5 199.5L519.5 203M527.5 196L524.5 199.5L527.5 203M535.5 196L532.5 199.5L535.5 203M543.5 196L540.5 199.5L543.5 203M551.5 196L548.5 199.5L551.5 203M559.5 196L556.5 199.5L559.5 203M567.5 196L564.5 199.5L567.5 203M575.5 196L572.5 199.5L575.5 203M583.5 196L580.5 199.5L583.5 203M591.5 196L588.5 199.5L591.5 203M599.5 196L596.5 199.5L599.5 203M607.5 196L604.5 199.5L607.5 203M615.5 196L612.5 199.5L615.5 203M623.5 196L620.5 199.5L623.5 203M631.5 196L628.5 199.5L631.5 203M639.5 196L636.5 199.5L639.5 203M647.5 196L644.5 199.5L647.5 203M655.5 196L652.5 199.5L655.5 203M663.5 196L660.5 199.5L663.5 203M671.5 196L668.5 199.5L671.5 203M679.5 196L676.5 199.5L679.5 203M687.5 196L684.5 199.5L687.5 203M695.5 196L692.5 199.5L695.5 203M703.5 196L700.5 199.5L703.5 203M711.5 196L708.5 199.5L711.5 203M719.5 196L716.5 199.5L719.5 203M727.5 196L724.5 199.5L727.5 203M735.5 196L732.5 199.5L735.5 203M743.5 196L740.5 199.5L743.5 203M751.5 196L748.5 199.5L751.5 203M759.5 196L756.5 199.5L759.5 203M767.5 196L764.5 199.5L767.5 203M775.5 196L772.5 199.5L775.5 203M783.5 196L780.5 199.5L783.5 203M791.5 196L788.5 199.5L791.5 203M799.5 196L796.5 199.5L799.5 203M807.5 196L804.5 199.5L807.5 203M815.5 196L812.5 199.5L815.5 203M823.5 196L820.5 199.5L823.5 203M831.5 196L828.5 199.5L831.5 203M839.5 196L836.5 199.5L839.5 203M847.5 196L844.5 199.5L847.5 203M855.5 196L852.5 199.5L855.5 203M863.5 196L860.5 199.5L863.5 203M871.5 196L868.5 199.5L871.5 203M879.5 196L876.5 199.5L879.5 203M887.5 196L884.5 199.5L887.5 203M895.5 196L892.5 199.5L895.5 203M903.5 196L900.5 199.5L903.5 203M911.5 196L908.5 199.5L911.5 203M919.5 196L916.5 199.5L919.5 203M927.5 196L924.5 199.5L927.5 203M935.5 196L932.5 199.5L935.5 203M943.5 196L940.5 199.5L943.5 203" stroke="#0c0c78" fill="none"/>
<text id="cep8" x="111 120 129 138 145" y="220" fill="#1f78b4" transform="matrix(1 0 0 1.08 0 -17.600)">CEP<tspan font-size="12.04" textLength="14" lengthAdjust="spacingAndGlyphs">83</tspan></text>
<path d="M156 215.5H949" stroke="#1f78b4" fill="none" class="c"/>
<path d="M159.5 212L156.5 215.5L159.5 219M167.5 212L164.5 215.5L167.5 219M175.5 212L172.5 215.5L175.5 219M183.5 212L180.5 215.5L183.5 219M191.5 212L188.5 215.5L191.5 219M199.5 212L196.5 215.5L199.5 219M207.5 212L204.5 215.5L207.5 219M215.5 212L212.5 215.5L215.5 219M223.5 212L220.5 215.5L223.5 219M231.5 212L228.5 215.5L231.5 219M239.5 212L236.5 215.5L239.5 219M247.5 212L244.5 215.5L247.5 219M255.5 212L252.5 215.5L255.5 219M263.5 212L260.5 215.5L263.5 219M271.5 212L268.5 215.5L271.5 219M279.5 212L276.5 215.5L279.5 219M287.5 212L284.5 215.5L287.5 219M295.5 212L292.5 215.5L295.5 219M303.5 212L300.5 215.5L303.5 219M311.5 212L308.5 215.5L311.5 219M319.5 212L316.5 215.5L319.5 219M327.5 212L324.5 215.5L327.5 219M335.5 212L332.5 215.5L335.5 219M343.5 212L340.5 215.5L343.5 219M351.5 212L348.5 215.5L351.5 219M359.5 212L356.5 215.5L359.5 219M367.5 212L364.5 215.5L367.5 219M375.5 212L372.5 215.5L375.5 219M383.5 212L380.5 215.5L383.5 219M391.5 212L388.5 215.5L391.5 219M399.5 212L396.5 215.5L399.5 219M407.5 212L404.5 215.5L407.5 219M415.5 212L412.5 215.5L415.5 219M423.5 212L420.5 215.5L423.5 219M431.5 212L428.5 215.5L431.5 219M439.5 212L436.5 215.5L439.5 219M447.5 212L444.5 215.5L447.5 219M455.5 212L452.5 215.5L455.5 219M463.5 212L460.5 215.5L463.5 219M471.5 212L468.5 215.5L471.5 219M479.5 212L476.5 215.5L479.5 219M487.5 212L484.5 215.5L487.5 219M495.5 212L492.5 215.5L495.5 219M503.5 212L500.5 215.5L503.5 219M511.5 212L508.5 215.5L511.5 219M519.5 212L516.5 215.5L519.5 219M527.5 212L524.5 215.5L527.5 219M535.5 212L532.5 215.5L535.5 219M543.5 212L540.5 215.5L543.5 219M551.5 212L548.5 215.5L551.5 219M559.5 212L556.5 215.5L559.5 219M567.5 212L564.5 215.5L567.5 219M575.5 212L572.5 215.5L575.5 219M583.5 212L580.5 215.5L583.5 219M591.5 212L588.5 215.5L591.5 219M599.5 212L596.5 215.5L599.5 219M607.5 212L604.5 215.5L607.5 219M615.5 212L612.5 215.5L615.5 219M623.5 212L620.5 215.5L623.5 219M631.5 212L628.5 215.5L631.5 219M639.5 212L636.5 215.5L639.5 219M647.5 212L644.5 215.5L647.5 219M655.5 212L652.5 215.5L655.5 219M663.5 212L660.5 215.5L663.5 219M671.5 212L668.5 215.5L671.5 219M679.5 212L676.5 215.5L679.5 219M687.5 212L684.5 215.5L687.5 219M695.5 212L692.5 215.5L695.5 219M703.5 212L700.5 215.5L703.5 219M711.5 212L708.5 215.5L711.5 219M719.5 212L716.5 215.5L719.5 219M727.5 212L724.5 215.5L727.5 219M735.5 212L732.5 215.5L735.5 219M743.5 212L740.5 215.5L743.5 219M751.5 212L748.5 215.5L751.5 219M759.5 212L756.5 215.5L759.5 219M767.5 212L764.5 215.5L767.5 219M775.5 212L772.5 215.5L775.5 219M783.5 212L780.5 215.5L783.5 219M791.5 212L788.5 215.5L791.5 219M799.5 212L796.5 215.5L799.5 219M807.5 212L804.5 215.5L807.5 219M815.5 212L812.5 215.5L815.5 219M823.5 212L820.5 215.5L823.5 219M831.5 212L828.5 215.5L831.5 219M839.5 212L836.5 215.5L839.5 219M847.5 212L844.5 215.5L847.5 219M855.5 212L852.5 215.5L855.5 219M863.5 212L860.5 215.5L863.5 219M871.5 212L868.5 215.5L871.5 219M879.5 212L876.5 215.5L879.5 219M887.5 212L884.5 215.5L887.5 219M895.5 212L892.5 215.5L895.5 219M903.5 212L900.5 215.5L903.5 219M911.5 212L908.5 215.5L911.5 219M919.5 212L916.5 215.5L919.5 219M927.5 212L924.5 215.5L927.5 219M935.5 212L932.5 215.5L935.5 219M943.5 212L940.5 215.5L943.5 219" stroke="#1f78b4" fill="none"/>
<text id="t_refseq" x="491 499 505 508 515 521 527 530 536 542 548 554 560 563 566 570 576 585 588 596 604 611" y="236" font-size="11" transform="matrix(1 0 0 1.04 0 -9.440)">RefSeq genes from NCBI</text>
<text id="l_refseq" x="60 69 76 80 89 96 103 107 116 123 127 134 138 145" y="251" fill="#0c0c78" transform="matrix(1 0 0 1.08 0 -20.080)">RefSeq Curated</text>
<path d="M156 246.5H949" stroke="#0c0c78" fill="none" class="c"/>
<text id="t_pubs" x="445 452 458 464 466 468 474 480 483 485 491 497 503 506 509 516 522 528 534 540 546 552 558 564 567 569 575 578 585 591 593 599 605 608 610 613 615 621 624 631 635 638 640 646 648 654" y="267" font-size="11" transform="matrix(1 0 0 1.04 0 -10.680)">Publications: Sequences in Scientific Articles</text>
<text id="l_seq" x="87 96 103 110 117 124 131 138 145" y="282" transform="matrix(1 0 0 1.08 0 -22.560)">Sequences</text>
<text id="l_snps" x="118 127 136 145" y="298" transform="matrix(1 0 0 1.08 0 -23.840)">SNPs</text>
<text id="t_omim" x="368 378 389 393 404 408 418 425 432 439 443 452 459 466 473 480 484 491 498 505 512 516 520 524 533 540 544 551 555 565 569 576 583 590 594 603 610 617 621 630 637 641 650 653 660 667 674 681 688 692 699 706 713 720 723 730" y="315" fill="#005000" transform="matrix(1 0 0 1.08 0 -25.200)">OMIM Gene Phenotypes - Dark Green Can Be Disease-causing</text>
<text id="l_omim" x="74 84 95 99 110 114 124 131 138 145" y="329" fill="#005000" transform="matrix(1 0 0 1.08 0 -26.320)">OMIM Genes</text>
<rect x="156" y="317" width="793" height="15" fill="#005000" class="c"/>
<text id="t_snp" x="436 443 449 455 459 462 465 474 480 486 492 495 497 503 506 513 519 523 525 531 537 540 546 549 552 556 562 571 574 580 586 593 601 608 611 615 621 623 629 635 641 647 650 656 662" y="345" font-size="11" transform="matrix(1 0 0 1.04 0 -13.800)">Short Genetic Variants from dbSNP release 155</text>
<text id="l_snp" x="26 35 42 53 64 71 78 82 89 96 105 114 123 127 134 141 148" y="360" transform="matrix(1 0 0 1.08 0 -28.800)">Common dbSNP(<tspan font-size="12.04" textLength="21" lengthAdjust="spacingAndGlyphs">155</tspan>)</text>
<text id="t_gtex" x="266 276 283 290 297 301 310 317 324 328 335 342 349 352 359 366 370 373 380 384 391 398 402 406 409 416 423 430 437 444 448 452 456 463 474 478 488 496 505 512 516 525 534 543 547 554 561 568 572 579 583 587 594 601 608 615 622 626 633 640 651 658 661 668 675 679 683 690 697 704 708 715 722 729 736 740 747 751 755 764 771 775 779 788 795 802 806 813 820 827 834" y="377" transform="matrix(1 0 0 1.08 0 -30.160)">Gene Expression in <tspan font-size="12.04" textLength="14" lengthAdjust="spacingAndGlyphs">54</tspan> tissues from GTEx RNA-seq of <tspan font-size="12.04" textLength="35" lengthAdjust="spacingAndGlyphs">17382</tspan> samples, <tspan font-size="12.04" textLength="21" lengthAdjust="spacingAndGlyphs">948</tspan> donors (V<tspan font-size="12.04" textLength="7" lengthAdjust="spacingAndGlyphs">8</tspan>, Aug <tspan font-size="12.04" textLength="28" lengthAdjust="spacingAndGlyphs">2019</tspan>)</text>
<text id="l_gtex" x="111 120 129 138 145" y="405" transform="matrix(1 0 0 1.08 0 -32.400)">CEP<tspan font-size="12.04" textLength="14" lengthAdjust="spacingAndGlyphs">83</tspan></text>
<g class="c">
<rect x="156" y="380" width="378" height="37" fill="#f4f4f4"/>
<rect x="157" y="381" width="376" height="35" fill="#fff"/>
<rect x="156" y="394" width="5" height="22" fill="#FFA54F"/>
<rect x="163" y="396" width="5" height="20" fill="#EE9A00"/>
<rect x="170" y="393" width="5" height="23" fill="#8FBC8F"/>
<rect x="177" y="397" width="5" height="19" fill="#8B1C62"/>
<rect x="184" y="395" width="5" height="21" fill="#EE6A50"/>
<rect x="191" y="396" width="5" height="20" fill="#FF0000"/>
<rect x="198" y="395" width="5" height="21" fill="#CDB79E"/>
<rect x="205" y="399" width="5" height="17" fill="#EEEE00"/>
<rect x="212" y="399" width="5" height="17" fill="#EEEE00"/>
<rect x="219" y="401" width="5" height="15" fill="#EEEE00"/>
<rect x="226" y="398" width="5" height="18" fill="#EEEE00"/>
<rect x="233" y="399" width="5" height="17" fill="#EEEE00"/>
<rect x="240" y="400" width="5" height="16" fill="#EEEE00"/>
<rect x="247" y="398" width="5" height="18" fill="#EEEE00"/>
<rect x="254" y="401" width="5" height="15" fill="#EEEE00"/>
<rect x="261" y="401" width="5" height="15" fill="#EEEE00"/>
<rect x="268" y="401" width="5" height="15" fill="#EEEE00"/>
<rect x="275" y="404" width="5" height="12" fill="#EEEE00"/>
<rect x="282" y="401" width="5" height="15" fill="#EEEE00"/>
<rect x="289" y="403" width="5" height="13" fill="#EEEE00"/>
<rect x="296" y="393" width="5" height="23" fill="#00CDCD"/>
<rect x="303" y="385" width="5" height="31" fill="#EE82EE"/>
<rect x="310" y="390" width="5" height="26" fill="#9AC0CD"/>
<rect x="317" y="390" width="5" height="26" fill="#EED5D2"/>
<rect x="324" y="389" width="5" height="27" fill="#EED5D2"/>
<rect x="331" y="396" width="5" height="20" fill="#CDB79E"/>
<rect x="338" y="397" width="5" height="19" fill="#EEC591"/>
<rect x="345" y="397" width="5" height="19" fill="#8B7355"/>
<rect x="352" y="397" width="5" height="19" fill="#8B7355"/>
<rect x="359" y="397" width="5" height="19" fill="#CDAA7D"/>
<rect x="366" y="392" width="5" height="24" fill="#EED5D2"/>
<rect x="373" y="394" width="5" height="22" fill="#B452CD"/>
<rect x="380" y="403" width="5" height="13" fill="#7A378B"/>
<rect x="387" y="401" width="5" height="15" fill="#CDB79E"/>
<rect x="394" y="396" width="5" height="20" fill="#CDB79E"/>
<rect x="401" y="404" width="5" height="12" fill="#CDB79E"/>
<rect x="408" y="392" width="5" height="24" fill="#9ACD32"/>
<rect x="415" y="398" width="5" height="18" fill="#CDB79E"/>
<rect x="422" y="403" width="5" height="13" fill="#7A67EE"/>
<rect x="429" y="387" width="5" height="29" fill="#FFD700"/>
<rect x="436" y="387" width="5" height="29" fill="#FFB6C1"/>
<rect x="443" y="399" width="5" height="17" fill="#CD9B1D"/>
<rect x="450" y="394" width="5" height="22" fill="#B4EEB4"/>
<rect x="457" y="393" width="5" height="23" fill="#D9D9D9"/>
<rect x="464" y="396" width="5" height="20" fill="#3A5FCD"/>
<rect x="471" y="397" width="5" height="19" fill="#1E90FF"/>
<rect x="478" y="397" width="5" height="19" fill="#CDB79E"/>
<rect x="485" y="396" width="5" height="20" fill="#CDB79E"/>
<rect x="492" y="398" width="5" height="18" fill="#FFD39B"/>
<rect x="499" y="380" width="5" height="36" fill="#A6A6A6"/>
<rect x="506" y="388" width="5" height="28" fill="#008B45"/>
<rect x="513" y="388" width="5" height="28" fill="#EED5D2"/>
<rect x="520" y="393" width="5" height="23" fill="#EED5D2"/>
<rect x="527" y="412" width="5" height="4" fill="#FF00FF"/>
<rect x="156" y="417" width="793" height="2" fill="#00007d"/>
</g>
<text id="t_h3k" x="281 290 297 306 313 320 329 336 340 351 358 362 369 373 377 387 391 395 402 409 413 421 428 435 442 449 453 462 469 476 480 484 493 500 504 507 514 521 525 534 541 548 555 558 565 569 576 580 587 591 600 603 610 621 628 635 639 646 650 654 661 668 672 679 683 690 697 700 703 707 710 713 720 727 734 738 742 746 753 764 768 777 786 795 805 814" y="434" transform="matrix(1 0 0 1.08 0 -34.720)">H<tspan font-size="12.04" textLength="7" lengthAdjust="spacingAndGlyphs">3</tspan>K<tspan font-size="12.04" textLength="14" lengthAdjust="spacingAndGlyphs">27</tspan>Ac Mark (Often Found Near Active Regulatory Elements) on <tspan font-size="12.04" textLength="7" lengthAdjust="spacingAndGlyphs">7</tspan> cell lines from ENCODE</text>
<text id="l_h3k" x="13 20 27 34 41 45 52 59 63 72 79 88 95 102 111" y="448" transform="matrix(1 0 0 1.08 0 -35.840)">Layered H<tspan font-size="12.04" textLength="7" lengthAdjust="spacingAndGlyphs">3</tspan>K<tspan font-size="12.04" textLength="14" lengthAdjust="spacingAndGlyphs">27</tspan>Ac</text>
<g class="c">
<rect x="156" y="464" width="793" height="1" fill="#ff8484"/>
<rect x="156" y="465" width="793" height="1" fill="#741060"/>
</g>
<text id="t_phylop" x="405 412 419 426 430 437 444 448 452 459 466 470 477 481 488 495 499 508 515 522 529 538 541 548 555 559 568 575 582 589 596 600 607 614 618 621 628 635 639 646 653 657 666 673 680 683 690" y="480" fill="#3c3c8c" transform="matrix(1 0 0 1.08 0 -38.400)"><tspan font-size="12.04" textLength="21" lengthAdjust="spacingAndGlyphs">100</tspan> vertebrates Basewise Conservation by PhyloP</text>
<text id="l_488" x="116 123 127 134" y="479" fill="#3c3c8c">4.88</text>
<text id="l_488u" x="145" y="478" fill="#3c3c8c">_</text>
<text id="l_cons" x="13 20 27 34 38 47 54 58 62 66 70 79 86 93" y="504" fill="#3c3c8c" transform="matrix(1 0 0 1.08 0 -40.320)"><tspan font-size="12.04" textLength="21" lengthAdjust="spacingAndGlyphs">100</tspan> Vert. Cons</text>
<text id="l_45" x="119 123 130 134" y="529" fill="#8c3c3c">-4.5</text>
<text id="l_45u" x="145" y="528" fill="#8c3c3c">_</text>
<path d="M188.2 507.6L203.0 503.95H214.5L229.0 507.6V507.95H224.4L212.2 505.0H205.3L193.1 507.95H188.2Z" fill="#f00"/>
<rect x="205.2" y="506" width="7.4" height="0.8" fill="#f00" opacity="0.3"/>
<path d="M642.3 507.6L657.1 503.95H668.6L683.1 507.6V507.95H678.5L666.3 505.0H659.4L647.2 507.95H642.3Z" fill="#f00"/>
<rect x="659.3" y="506" width="7.4" height="0.8" fill="#f00" opacity="0.3"/>
<path d="M755.6 507.6L770.4 503.95H781.9L796.4 507.6V507.95H791.8L779.6 505.0H772.7L760.5 507.95H755.6Z" fill="#f00"/>
<rect x="772.6" y="506" width="7.4" height="0.8" fill="#f00" opacity="0.3"/>
<defs><linearGradient id="fl" x1="0" x2="1" y1="0" y2="0"><stop offset="0" stop-color="#f00" stop-opacity="0"/><stop offset="0.12" stop-color="#f00" stop-opacity="0.3"/><stop offset="0.35" stop-color="#f00" stop-opacity="0.5"/><stop offset="0.5" stop-color="#f00" stop-opacity="0.22"/><stop offset="0.65" stop-color="#f00" stop-opacity="0.5"/><stop offset="0.88" stop-color="#f00" stop-opacity="0.3"/><stop offset="1" stop-color="#f00" stop-opacity="0"/></linearGradient></defs>
<rect x="415.5" y="508" width="40.5" height="1" fill="url(#fl)"/>
<text id="t_multiz" x="445 456 463 466 470 473 480 484 493 496 499 506 513 524 531 538 542 549 553 560 564 568 575 582 589 593 602 609 613 617 624 631 635 642 646 653" y="546" fill="#000a64" transform="matrix(1 0 0 1.08 0 -43.680)">Multiz Alignments of <tspan font-size="12.04" textLength="21" lengthAdjust="spacingAndGlyphs">100</tspan> Vertebrates</text>
<text id="sp0" x="121 131 138 145" y="560" fill="#e6820a" transform="matrix(1 0 0 1.08 0 -44.800)">Gaps</text>
<text id="sp1" x="111 120 127 138 145" y="575" fill="#000a64" transform="matrix(1 0 0 1.08 0 -46.000)">Human</text>
<text id="sp2" x="108 117 124 131 138 145" y="590" fill="#000a64" transform="matrix(1 0 0 1.08 0 -47.200)">Rhesus</text>
<text id="sp3" x="113 124 131 138 145" y="605" fill="#005a0a" transform="matrix(1 0 0 1.08 0 -48.400)">Mouse</text>
<text id="sp4" x="129 138 145" y="620" fill="#000a64" transform="matrix(1 0 0 1.08 0 -49.600)">Dog</text>
<text id="sp5" x="101 110 113 120 127 134 141 148" y="635" fill="#005a0a" transform="matrix(1 0 0 1.08 0 -50.800)">Elephant</text>
<text id="sp6" x="105 114 121 124 131 138 145" y="650" fill="#005a0a" transform="matrix(1 0 0 1.08 0 -52.000)">Chicken</text>
<text id="sp7" x="84 93 100 104 108 115 122 125 132 139 142 145" y="665" fill="#000a64" transform="matrix(1 0 0 1.08 0 -53.200)">X_tropicalis</text>
<text id="sp8" x="98 106 113 120 124 131 135 138 145" y="680" fill="#005a0a" transform="matrix(1 0 0 1.08 0 -54.400)">Zebrafish</text>
<text id="mh0" x="206" y="575" fill="#000a64" transform="matrix(1 0 0 1.08 0 -46.000)">A</text>
<text id="mr0" x="206" y="590" fill="#000a64" transform="matrix(1 0 0 1.08 0 -47.200)">A</text>
<text id="mm0" x="207" y="606" fill="#8080b8">=</text>
<text id="md0" x="209" y="620" fill="#8080b8">-</text>
<text id="me0" x="207" y="636" fill="#8080b8">=</text>
<text id="mx0" x="209" y="665" fill="#8080b8">-</text>
<text id="mz0" x="207" y="681" fill="#8080b8">=</text>
<text id="mh1" x="320" y="575" fill="#000a64" transform="matrix(1 0 0 1.08 0 -46.000)">T</text>
<text id="mr1" x="319" y="590" fill="#8080b8" transform="matrix(1 0 0 1.08 0 -47.200)">C</text>
<text id="mm1" x="320" y="606" fill="#8080b8">=</text>
<text id="md1" x="322" y="620" fill="#8080b8">-</text>
<text id="me1" x="320" y="636" fill="#8080b8">=</text>
<text id="mx1" x="322" y="665" fill="#8080b8">-</text>
<text id="mz1" x="320" y="681" fill="#8080b8">=</text>
<text id="mh2" x="432" y="575" fill="#000a64" transform="matrix(1 0 0 1.08 0 -46.000)">A</text>
<text id="mr2" x="432" y="590" fill="#000a64" transform="matrix(1 0 0 1.08 0 -47.200)">A</text>
<text id="mm2" x="433" y="606" fill="#8080b8">=</text>
<text id="md2" x="435" y="620" fill="#8080b8">-</text>
<text id="me2" x="433" y="636" fill="#8080b8">=</text>
<text id="mx2" x="435" y="665" fill="#8080b8">-</text>
<text id="mz2" x="433" y="681" fill="#8080b8">=</text>
<text id="mh3" x="546" y="575" fill="#000a64" transform="matrix(1 0 0 1.08 0 -46.000)">A</text>
<text id="mr3" x="548" y="590" fill="#8080b8">-</text>
<text id="mm3" x="546" y="606" fill="#8080b8">=</text>
<text id="md3" x="548" y="620" fill="#8080b8">-</text>
<text id="me3" x="546" y="636" fill="#8080b8">=</text>
<text id="mx3" x="548" y="665" fill="#8080b8">-</text>
<text id="mz3" x="546" y="681" fill="#8080b8">=</text>
<text id="mh4" x="659" y="575" fill="#000a64" transform="matrix(1 0 0 1.08 0 -46.000)">A</text>
<text id="mr4" x="662" y="590" fill="#8080b8">-</text>
<text id="mm4" x="660" y="606" fill="#8080b8">=</text>
<text id="md4" x="662" y="620" fill="#8080b8">-</text>
<text id="me4" x="660" y="636" fill="#8080b8">=</text>
<text id="mx4" x="662" y="665" fill="#8080b8">-</text>
<text id="mz4" x="660" y="681" fill="#8080b8">=</text>
<text id="mh5" x="772" y="575" fill="#000a64" transform="matrix(1 0 0 1.08 0 -46.000)">A</text>
<text id="mr5" x="775" y="590" fill="#8080b8">-</text>
<text id="mm5" x="773" y="606" fill="#8080b8">=</text>
<text id="md5" x="775" y="620" fill="#8080b8">-</text>
<text id="me5" x="773" y="636" fill="#8080b8">=</text>
<text id="mx5" x="775" y="665" fill="#8080b8">-</text>
<text id="mz5" x="773" y="681" fill="#8080b8">=</text>
<text id="mh6" x="886" y="575" fill="#000a64" transform="matrix(1 0 0 1.08 0 -46.000)">A</text>
<text id="mr6" x="888" y="590" fill="#8080b8">-</text>
<text id="mm6" x="886" y="606" fill="#8080b8">=</text>
<text id="md6" x="888" y="620" fill="#8080b8">-</text>
<text id="me6" x="886" y="636" fill="#8080b8">=</text>
<text id="mx6" x="888" y="665" fill="#8080b8">-</text>
<text id="mz6" x="886" y="681" fill="#8080b8">=</text>
<text id="t_rmsk" x="441 450 457 464 471 478 482 485 492 499 503 512 515 522 533 540 547 551 558 562 569 576 580 589 596 603 610 617 621 632 639 646 653 660" y="696" transform="matrix(1 0 0 1.08 0 -55.680)">Repeating Elements by RepeatMasker</text>
<text id="l_rmsk" x="68 77 84 91 98 105 109 120 127 134 141 148" y="710" transform="matrix(1 0 0 1.08 0 -56.800)">RepeatMasker</text>
<rect x="156" y="698" width="793" height="15" fill="#000" class="c"/>
</svg></body></html>
